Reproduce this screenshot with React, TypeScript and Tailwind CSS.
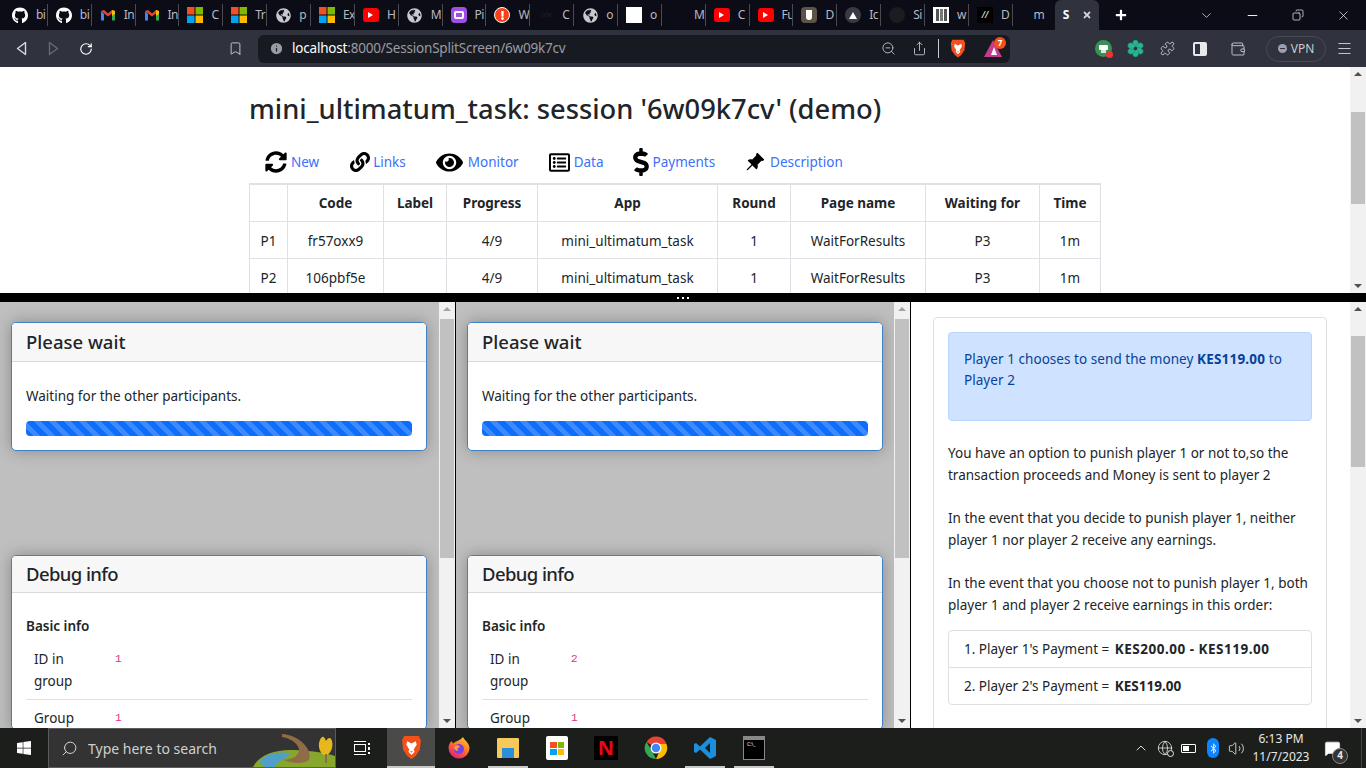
import React from 'react';
import { BsPinAngleFill } from 'react-icons/bs';
import { FaGithub, FaWindows, FaSyncAlt, FaLink, FaEye, FaRegListAlt, FaDollarSign, FaGlobeAmericas, FaTimes, FaPlus, FaExclamation, FaBluetoothB } from 'react-icons/fa';
import { ChevronDown, Minus, Bookmark, Info, Share, Menu, Wallet, Copy, X, ChevronUp, Globe, Volume2, MessageSquare, ZoomOut, Puzzle, RotateCw, Search } from 'lucide-react';

const sans = "font-['Noto_Sans',sans-serif]";

function Ms() {
  return (
    <svg width="16" height="16" viewBox="0 0 16 16">
      <rect width="7.5" height="7.5" fill="#f25022" />
      <rect x="8.5" width="7.5" height="7.5" fill="#7fba00" />
      <rect y="8.5" width="7.5" height="7.5" fill="#00a4ef" />
      <rect x="8.5" y="8.5" width="7.5" height="7.5" fill="#ffb900" />
    </svg>
  );
}

function Gmail() {
  return (
    <svg width="16" height="16" viewBox="0 0 16 16" fill="none">
      <path d="M1 4v9.500h3V7z" fill="#4285f4" />
      <path d="M15 4v9.500h-3V7z" fill="#34a853" />
      <path d="M1 4l7 5.500L15 4l-3 -1-4 3.500L4 3z" fill="#ea4335" />
      <path d="M12 3l3 1v3l-3 2z" fill="#fbbc04" />
    </svg>
  );
}

function Yt() {
  return (
    <span className="flex h-[14px] w-4 items-center justify-center rounded-[3px] bg-[#f00]">
      <span className="h-0 w-0 border-y-[3px] border-l-[5px] border-y-transparent border-l-white" />
    </span>
  );
}

function Lion({ size = 16 }: { size?: number }) {
  return (
    <svg width={size} height={size * 1.15} viewBox="0 0 20 23">
      <path d="M3 1h14l2 4-1 9-4 6-4 3-4-3-4-6L1 5z" fill="#f1511b" />
      <path d="M6 6l4 2 4-2 1 3-3 5 1 2-3 3-3-3 1-2-3-5z" fill="#fff" />
      <path d="M8.500 15.500h3L10 17z" fill="#f1511b" />
    </svg>
  );
}

const tabIcons: [React.ReactNode, string][] = [
  [<FaGithub className="text-white" size={17} />, 'bi'],
  [<FaGithub className="text-white" size={17} />, 'bi'],
  [<Gmail />, 'In'],
  [<Gmail />, 'In'],
  [<Ms />, 'C'],
  [<Ms />, 'Tr'],
  [<FaGlobeAmericas className="text-[#c8c8d0]" size={15} />, 'p'],
  [<Ms />, 'Ex'],
  [<Yt />, 'H'],
  [<FaGlobeAmericas className="text-[#c8c8d0]" size={15} />, 'M'],
  [<span className="flex h-4 w-4 items-center justify-center rounded-[4px] bg-[#a14ee8]"><span className="h-[8px] w-[10px] rounded-[2px] border-2 border-white" /></span>, 'Pi'],
  [<span className="flex h-4 w-4 items-center justify-center rounded-full border border-white bg-[#f4431c]"><FaExclamation className="text-white" size={9} /></span>, 'W'],
  [<span className="text-[7px] font-bold text-[#1a1a22]">olx</span>, 'C'],
  [<FaGlobeAmericas className="text-[#c8c8d0]" size={15} />, 'o'],
  [<span className="h-4 w-4 bg-white" />, 'o'],
  [<span className="h-4 w-4" />, 'M'],
  [<Yt />, 'C'],
  [<Yt />, 'Fu'],
  [<span className="flex h-4 w-4 items-center justify-center rounded-[4px] bg-[#5d5346]"><span className="h-[10px] w-[6px] rounded-b-full bg-white" /></span>, 'D'],
  [<span className="flex h-4 w-4 items-center justify-center rounded-full bg-[#3a3a42]"><span className="h-0 w-0 border-x-[4px] border-b-[7px] border-x-transparent border-b-white" /></span>, 'Ic'],
  [<span className="h-4 w-4 rounded-full bg-[#1b1b20]" />, 'Si'],
  [<span className="flex h-4 w-4 items-center justify-center gap-[1px] bg-white"><span className="h-3 w-[3px] bg-[#555]" /><span className="h-3 w-[3px] bg-[#777]" /><span className="h-3 w-[3px] bg-[#555]" /></span>, 'w'],
  [<span className="flex h-4 w-4 items-center justify-center bg-black text-[9px] italic text-white">//</span>, 'D'],
];

function Tab({ icon, label }: { icon: React.ReactNode; label: string }) {
  return (
    <div className="flex h-[22px] w-[43.860px] shrink-0 items-center overflow-hidden border-r border-[#4a4a55] pl-2">
      <span className="flex w-4 shrink-0 items-center justify-center">{icon}</span>
      <span className="ml-2 text-[12px] tracking-[-0.6px] text-[#b9b9c2]">{label}</span>
    </div>
  );
}

function TabStrip() {
  return (
    <div className="flex h-[30px] shrink-0 items-center bg-[#0c0c17] pl-[4px]">
      {tabIcons.map(([icon, label], i) => (
        <Tab key={i} icon={icon} label={label} />
      ))}
      <div className="flex h-[22px] w-[42px] shrink-0 items-center justify-end pr-[10px] text-[12px] text-[#b9b9c2]">m</div>
      <div className="flex h-[30px] w-[44px] shrink-0 items-center justify-between self-end rounded-t-[6px] bg-[#30323e] pl-[8px] pr-[7px] text-[12px] font-bold text-white">
        S<FaTimes size={10} className="text-[#d8d8de]" />
      </div>
      <FaPlus size={12} className="ml-[16px] text-white" />
      <div className="ml-auto flex items-center text-[#e8e8e8]">
        <ChevronDown size={15} strokeWidth={1.2} className="mr-[31px]" />
        <Minus size={15} strokeWidth={1.5} className="mr-[32px] text-white" />
        <Copy size={12} strokeWidth={1.5} className="mr-[32px] -scale-x-100" />
        <X size={15} strokeWidth={1.2} className="mr-[15px]" />
      </div>
    </div>
  );
}

function GptKnot() {
  return (
    <svg width="17" height="17" viewBox="0 0 17 17" className="ml-[15px]">
      {[0, 60, 120, 180, 240, 300].map(a => (
        <ellipse key={a} cx="8.500" cy="4" rx="3" ry="4" fill="#29b592" stroke="#1d7f6a" strokeWidth="0.5" transform={`rotate(${a} 8.500 8.500)`} />
      ))}
      <circle cx="8.500" cy="8.500" r="1.800" fill="#30323e" />
    </svg>
  );
}

function Toolbar() {
  return (
    <div className="flex h-[37px] shrink-0 items-center bg-[#30323e] text-[#c9cad1]">
      <svg width="11" height="15" viewBox="0 0 11 15" fill="none" className="ml-[16px]">
        <path d="M9.500 1.500v12L1.500 7.500z" stroke="#d8d9de" strokeWidth="1.400" strokeLinejoin="round" />
      </svg>
      <svg width="11" height="15" viewBox="0 0 11 15" fill="none" className="ml-[21px]">
        <path d="M1.500 1.500v12l8-6z" stroke="#666875" strokeWidth="1.400" strokeLinejoin="round" />
      </svg>
      <RotateCw size={14} strokeWidth={2} className="ml-[20px] text-white" />
      <Bookmark size={15} strokeWidth={1.5} className="ml-[135px]" />
      <div className="ml-[15px] flex h-[28px] w-[752px] items-center rounded-[6px] bg-[#181a21]">
        <Info size={15} className="ml-[11px] fill-[#9a9ba3] text-[#181a21]" />
        <span className="ml-[8px] text-[13.500px] tracking-[-0.2px] text-[#9a9ba3]">
          <span className="text-white">localhost</span>:8000/SessionSplitScreen/6w09k7cv
        </span>
        <ZoomOut size={15} strokeWidth={1.4} className="ml-auto" />
        <Share size={15} strokeWidth={1.4} className="ml-[16px]" />
        <span className="ml-[11px] h-[19px] w-px bg-[#c9cad1]" />
        <span className="ml-[11px]"><Lion size={16} /></span>
        <span className="relative ml-[18px] mr-[8px] h-0 w-0 border-x-[9px] border-b-[17px] border-x-[#181a21] border-b-[#c33c90]">
          <span className="absolute left-[-2px] top-[7px] h-0 w-0 border-x-[3px] border-b-[8px] border-x-transparent border-b-white" />
          <span className="absolute left-[1px] top-[-3px] flex h-[12px] w-[12px] items-center justify-center rounded-full bg-[#f1511b] text-[8px] font-bold text-white">7</span>
        </span>
      </div>
      <span className="relative ml-[85px] flex h-[17px] w-[17px] flex-col items-center justify-center rounded-full bg-[#3c8f55]">
        <span className="h-[5px] w-[9px] rounded-[1px] bg-white" />
        <span className="h-[3px] w-[5px] bg-white/80" />
        <span className="absolute -bottom-[1px] -right-[1px] h-[7px] w-[7px] rounded-full bg-[#e33]" />
      </span>
      <GptKnot />
      <Puzzle size={15} strokeWidth={1.4} className="ml-[16px] text-[#d6d6dc]" />
      <span className="ml-[18px] flex h-[14px] w-[14px] justify-end rounded-[2px] border-2 border-[#e8e8ec]"><span className="w-[5px] bg-[#e8e8ec]" /></span>
      <Wallet size={16} strokeWidth={1.4} className="ml-[23px]" />
      <div className="ml-[20px] flex h-[26px] w-[60px] items-center justify-center gap-[4px] rounded-full border border-[#474954] text-[12px] text-[#c9cad1]">
        <span className="flex h-[9px] w-[9px] items-center justify-center rounded-full bg-[#9c9fb3]"><span className="h-px w-[5px] bg-[#30323e]" /></span>
        VPN
      </div>
      <Menu size={17} strokeWidth={1.4} className="ml-[10px]" />
    </div>
  );
}

function VScrollbar({ before, thumb, up = 'border-b-[#505050]' }: { before: string; thumb: string; up?: string }) {
  return (
    <div className="flex w-4 shrink-0 flex-col items-center bg-[#f1f1f1]">
      <span className={`mt-[5px] h-0 w-0 shrink-0 border-x-[4px] border-b-[4px] border-x-transparent ${up}`} />
      <span className={`w-full shrink-0 ${before}`} />
      <span className={`w-[14px] shrink-0 bg-[#c1c1c1] ${thumb}`} />
      <span className="mb-[5px] mt-auto h-0 w-0 shrink-0 border-x-[4px] border-t-[4px] border-x-transparent border-t-[#505050]" />
    </div>
  );
}

const columns = [
  ['', 'w-[38px]'],
  ['Code', 'w-[96px]'],
  ['Label', 'w-[63px]'],
  ['Progress', 'w-[91px]'],
  ['App', 'w-[180px]'],
  ['Round', 'w-[73px]'],
  ['Page name', 'w-[135px]'],
  ['Waiting for', 'w-[114px]'],
  ['Time', 'w-[61px]'],
];

const participants = [
  ['P1', 'fr57oxx9', '', '4/9', 'mini_ultimatum_task', '1', 'WaitForResults', 'P3', '1m'],
  ['P2', '106pbf5e', '', '4/9', 'mini_ultimatum_task', '1', 'WaitForResults', 'P3', '1m'],
];

const navItems = [
  { icon: <FaSyncAlt size={22} />, label: 'New', gap: 'ml-[16px]', tx: 'ml-[4px]' },
  { icon: <FaLink size={20} />, label: 'Links', gap: 'ml-[31px]', tx: 'ml-[3px]' },
  { icon: <FaEye size={27} />, label: 'Monitor', gap: 'ml-[30px]', tx: 'ml-[5px]' },
  { icon: <FaRegListAlt size={21} />, label: 'Data', gap: 'ml-[30px]', tx: 'ml-[4px]' },
  { icon: <FaDollarSign size={28} />, label: 'Payments', gap: 'ml-[23px]', tx: '-ml-[2px]' },
  { icon: <BsPinAngleFill size={20} />, label: 'Description', gap: 'ml-[30px]', tx: 'ml-[5px]' },
];

function AdminPage() {
  return (
    <div className="flex h-[226px] shrink-0 bg-white">
      <div className="min-w-0 flex-1 overflow-hidden pl-[249px]">
        <h1 className="mt-[22px] text-[27.300px] font-medium leading-[40px] text-[#212529]">
          mini_ultimatum_task: session '6w09k7cv' (demo)
        </h1>
        <div className="mt-[16px] flex h-[34px] items-center">
          {navItems.map(item => (
            <div key={item.label} className={`flex items-center ${item.gap}`}>
              <span className="text-black">{item.icon}</span>
              <span className={`${item.tx} text-[13.500px] text-[#3d6ffb]`}>{item.label}</span>
            </div>
          ))}
        </div>
        <table className="mt-[4px] table-fixed border-collapse border border-t-2 border-[#dee2e6] text-[13.500px] text-[#212529]">
          <thead>
            <tr className="h-[37px]">
              {columns.map(([name, w]) => (
                <th key={name} className={`${w} border border-[#dee2e6] p-0 text-center font-bold`}>{name}</th>
              ))}
            </tr>
          </thead>
          <tbody>
            {participants.map(row => (
              <tr key={row[0]} className="h-[37px]">
                {row.map((cell, i) => (
                  <td key={i} className="border border-[#dee2e6] p-0 pt-[4px] text-center">{cell}</td>
                ))}
              </tr>
            ))}
          </tbody>
        </table>
      </div>
      <VScrollbar before="h-[36px]" thumb="h-[92px]" />
    </div>
  );
}

function Card({ title, head, children }: { title: string; head: string; children: React.ReactNode }) {
  return (
    <div className="w-[416px] overflow-hidden rounded-[5px] border border-[#3e82c4] bg-white shadow-[0_0_16px_rgba(0,0,0,0.28)]">
      <div className={`flex items-center border-b border-[#d9d9d9] bg-[#f7f7f7] px-[14px] text-[18.500px] font-medium text-[#212529] ${head}`}>
        {title}
      </div>
      <div className="px-[14px]">{children}</div>
    </div>
  );
}

function PlayerPane({ id, width }: { id: string; width: string }) {
  return (
    <div className={`flex shrink-0 border-r border-black ${width}`}>
      <div className="min-w-0 flex-1 overflow-hidden bg-[#bfbfbf] pl-[11px] pt-[20px] text-[13.500px] text-[#212529]">
        <Card title="Please wait" head="h-[39px]">
          <p className="mt-[24px] leading-[21px]">Waiting for the other participants.</p>
          <div className="mb-[14px] mt-[14px] h-[15px] rounded-[4px] bg-[repeating-linear-gradient(45deg,#0d6efd_0,#0d6efd_5.300px,#3c8afe_5.300px,#3c8afe_10.600px)]" />
        </Card>
        <div className="mt-[104px]">
          <Card title="Debug info" head="h-[37px] tracking-[-0.6px]">
            <p className="mt-[23px] font-semibold leading-[21px]">Basic info</p>
            <div className="mt-[11px] flex border-b border-[#dee2e6] pb-[7px] pl-[8px] leading-[22px]">
              <span className="w-[81px]">ID in<br />group</span>
              <code className="font-['Liberation_Mono',monospace] text-[11px] text-[#d63384]">{id}</code>
            </div>
            <div className="mt-[7px] flex pl-[8px] leading-[22px]">
              <span className="w-[81px]">Group</span>
              <code className="font-['Liberation_Mono',monospace] text-[11px] text-[#d63384]">1</code>
            </div>
          </Card>
        </div>
      </div>
      <VScrollbar before="h-[8px]" thumb="h-[239px]" up="border-b-[#a3a3a3]" />
    </div>
  );
}

function InstructionsPane() {
  return (
    <div className="flex min-w-0 flex-1">
      <div className="min-w-0 flex-1 overflow-hidden bg-white pl-[22px] pr-[23px] pt-[15px] text-[13.500px] leading-[21.500px] text-[#212529]">
        <div className="rounded-[4px] border border-[#dfdfdf] px-[14px] pt-[14px] pb-[40px]">
          <div className="h-[89px] rounded-[4px] border border-[#b6d4fe] bg-[#cfe2ff] px-[15px] pt-[16px] leading-[21px] tracking-[0.05px] text-[#084298]">
            Player 1 chooses to send the money <b className="tracking-[0.2px]">KES119.00</b> to Player 2
          </div>
          <p className="mt-[22px]">You have an option to punish player 1 or not to,so the transaction proceeds and Money is sent to player 2</p>
          <p className="mt-[22px]">In the event that you decide to punish player 1, neither player 1 nor player 2 receive any earnings.</p>
          <p className="mt-[22px]">In the event that you choose not to punish player 1, both player 1 and player 2 receive earnings in this order:</p>
          <ol className="mt-[14px] rounded-[4px] border border-[#dfdfdf]">
            <li className="flex h-[37px] items-center border-b border-[#dfdfdf] px-[15px] pt-[1px]">
              <span>1. Player 1's Payment =&nbsp;<b className="ml-[2px] tracking-[0.5px]">KES200.00 - KES119.00</b></span>
            </li>
            <li className="flex h-[36px] items-center px-[15px] pt-[1px]">
              <span>2. Player 2's Payment =&nbsp;<b className="ml-[2px]">KES119.00</b></span>
            </li>
          </ol>
        </div>
      </div>
      <VScrollbar before="h-[25px]" thumb="h-[131px]" />
    </div>
  );
}

function ChromeIcon() {
  return (
    <svg width="24" height="24" viewBox="0 0 24 24">
      <path d="M12 12L2.500 6A11 11 0 0 1 22.500 8H12z" fill="#ea4335" />
      <path d="M12 23A11 11 0 0 1 2.500 6L8 15z" fill="#34a853" />
      <path d="M12 23A11 11 0 0 0 22.500 8H15l1 6z" fill="#fbbc04" />
      <circle cx="12" cy="12" r="5.500" fill="#fff" />
      <circle cx="12" cy="12" r="4.200" fill="#4285f4" />
    </svg>
  );
}

function FirefoxIcon() {
  return (
    <svg width="24" height="24" viewBox="0 0 24 24">
      <defs>
        <linearGradient id="ff" x1="0.8" y1="0" x2="0.2" y2="1">
          <stop offset="0" stopColor="#ffc928" />
          <stop offset="0.5" stopColor="#ff6b2c" />
          <stop offset="1" stopColor="#e31587" />
        </linearGradient>
      </defs>
      <path d="M16 1c1 3 6 5 6.500 11A10.500 10.500 0 0 1 1.500 12C1.500 9 3 6 5 5c0 1 .5 2 1 2.500C8 5 13 5 16 1z" fill="url(#ff)" />
      <circle cx="12" cy="13" r="5" fill="#7542e5" />
      <path d="M7 11c2-2.500 5-2 6 0-2 .5-3 2-2 4-2 0-4-1.500-4-4z" fill="#ff9a2e" />
    </svg>
  );
}

function TaskIcon({ width, active, children }: { width: string; active?: boolean; children: React.ReactNode }) {
  return (
    <div className={`relative flex h-[40px] shrink-0 items-center justify-center ${width}`}>
      {children}
      {active && <span className="absolute bottom-0 h-[2px] w-[40px] bg-[#c8c8c8]" />}
    </div>
  );
}

function Taskbar() {
  return (
    <div className="flex h-[40px] shrink-0 items-center bg-[#1c1e1c] text-white">
      <div className="flex w-[48px] shrink-0 justify-center"><FaWindows size={16} /></div>
      <div className="relative flex h-[40px] w-[288px] shrink-0 items-center overflow-hidden border border-[#5c5c5c] bg-[#333]">
        <Search size={17} strokeWidth={1.4} className="ml-[12px] -scale-x-100 text-[#d8d8d8]" />
        <span className="ml-[10px] text-[14px] text-[#cfcfcf]">Type here to search</span>
        <svg width="82" height="38" viewBox="0 0 82 38" className="absolute bottom-0 right-0">
          <path d="M0 38C6 26 22 20 42 21C60 22 74 24 82 27V38z" fill="#86a72c" />
          <path d="M6 33C12 25 24 22 38 24C34 30 24 32 22 38H12z" fill="#4f9fc8" />
          <path d="M29 5C46 6 60 20 56 31C50 35 42 35 30 31C42 30 46 26 46 20C44 13 36 9 29 8z" fill="#8f6c45" />
          <path d="M66 14C68 6 71 6 73 12C75 8 78 8 79 12C81 20 76 26 73 26C70 27 65 22 66 14z" fill="#e6b820" />
          <rect x="72" y="25" width="2" height="9" fill="#8f6c45" />
        </svg>
      </div>
      <TaskIcon width="w-[51px]">
        <span className="flex items-center gap-[2px]">
          <span className="flex flex-col gap-[2px]">
            <span className="h-px w-[12px] bg-white" />
            <span className="h-[8px] w-[12px] border border-white" />
            <span className="h-px w-[12px] bg-white" />
          </span>
          <span className="flex flex-col gap-[2px]">
            <span className="h-[2px] w-[2px] bg-white" />
            <span className="h-[3px] w-[2px] bg-white" />
            <span className="h-[2px] w-[2px] bg-white" />
          </span>
        </span>
      </TaskIcon>
      <div className="flex h-[40px] w-[48px] shrink-0 items-center justify-center border-b-2 border-[#c8c8c8] bg-[#4a4a48]"><Lion size={21} /></div>
      <TaskIcon width="w-[48px]"><FirefoxIcon /></TaskIcon>
      <TaskIcon width="w-[50px]" active>
        <span className="relative h-[20px] w-[22px] rounded-[1px] bg-[#f6c95a]">
          <span className="absolute bottom-0 left-[5px] h-[10px] w-[12px] bg-[#2a8fd8]" />
        </span>
      </TaskIcon>
      <TaskIcon width="w-[48px]">
        <span className="grid h-[24px] w-[22px] grid-cols-2 content-center justify-center gap-px rounded-[2px] bg-white px-[4px]">
          <span className="h-[6px] bg-[#f25022]" /><span className="h-[6px] bg-[#7fba00]" />
          <span className="h-[6px] bg-[#00a4ef]" /><span className="h-[6px] bg-[#ffb900]" />
        </span>
      </TaskIcon>
      <TaskIcon width="w-[50px]">
        <span className="flex h-[24px] w-[24px] items-center justify-center bg-black text-[20px] font-bold leading-none text-[#e50914]">N</span>
      </TaskIcon>
      <TaskIcon width="w-[49px]"><ChromeIcon /></TaskIcon>
      <TaskIcon width="w-[50px]" active>
        <svg width="24" height="24" viewBox="0 0 24 24">
          <path d="M17 1l6 3v16l-6 3L7 13.500 3 17l-2-1V8l2-1 4 3.500z" fill="#1b8fdc" />
          <path d="M17 7l-5 5 5 5z" fill="#1c1e1c" />
        </svg>
      </TaskIcon>
      <TaskIcon width="w-[48px]" active>
        <span className="h-[24px] w-[22px] border border-[#888] border-t-[4px] bg-black pl-[3px] pt-[2px] text-[5px] leading-none text-white">C:\_</span>
      </TaskIcon>
      <div className="ml-auto flex h-[40px] items-center text-[#e8e8e8]">
        <ChevronUp size={16} strokeWidth={1.4} />
        <span className="relative ml-[8px]">
          <Globe size={16} strokeWidth={1.2} />
          <span className="absolute -bottom-[1px] -right-[1px] h-[7px] w-[7px] rounded-full border border-[#e8e8e8] bg-[#1c1e1c]" />
        </span>
        <span className="ml-[8px] flex h-[9px] w-[15px] rounded-[1px] border border-white p-px">
          <span className="w-[6px] bg-white" />
        </span>
        <span className="ml-[11px] flex h-[20px] w-[12px] items-center justify-center rounded-full bg-[#0a84ff]"><FaBluetoothB size={11} /></span>
        <Volume2 size={17} strokeWidth={1.2} className="ml-[9px]" />
        <div className="ml-[5px] w-[62px] text-center text-[12px] leading-[18px]">
          <div>6:13 PM</div>
          <div>11/7/2023</div>
        </div>
        <span className="relative ml-[12px] mr-[20px]">
          <MessageSquare size={17} className="fill-white" strokeWidth={1} />
          <span className="absolute -bottom-[7px] -right-[7px] flex h-[16px] w-[16px] items-center justify-center rounded-full border border-[#888] bg-[#333] text-[10px] font-bold">4</span>
        </span>
        <span className="h-[40px] w-px bg-[#444]" />
        <span className="w-[4px]" />
      </div>
    </div>
  );
}

export default function App() {
  return (
    <div className={`flex h-[768px] w-[1366px] flex-col overflow-hidden bg-white ${sans}`}>
      <TabStrip />
      <Toolbar />
      <AdminPage />
      <div className="relative flex h-[9px] shrink-0 items-center justify-center gap-[3px] bg-black">
        <span className="h-[2px] w-[2px] bg-white" />
        <span className="h-[2px] w-[2px] bg-white" />
        <span className="h-[2px] w-[2px] bg-white" />
      </div>
      <div className="flex min-h-0 flex-1">
        <PlayerPane id="1" width="w-[456px]" />
        <PlayerPane id="2" width="w-[455px]" />
        <InstructionsPane />
      </div>
      <Taskbar />
    </div>
  );
}
